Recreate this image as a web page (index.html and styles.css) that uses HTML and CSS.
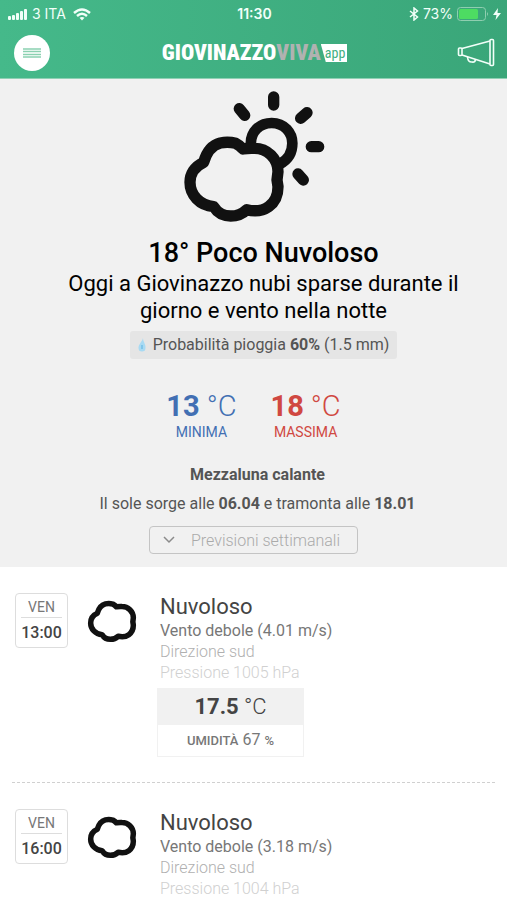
FILE: index.html
```
<!DOCTYPE html>
<html lang="it">
<head>
<meta charset="utf-8">
<meta name="viewport" content="width=device-width, initial-scale=1">
<title>GiovinazzoViva app</title>
<link rel="stylesheet" href="styles.css">
</head>
<body>
<svg width="0" height="0" class="defs" aria-hidden="true">
  <symbol id="cloud" viewBox="70 165 306 266">
    <path d="M132 247C104 260 91 283 91 307C91 345 120 376 162 380C173 398 192 408 213 408C232 408 250 400 261 389C312 402 355 374 355 320L352 300L355 275C355 235 322 205 285 205Q265 204 250 207Q240 196 228 190Q205 184 182 189C155 196 140 218 132 247Z" fill="none" stroke="#111" stroke-width="34" stroke-linejoin="round"/>
  </symbol>
</svg>
<header class="top">
  <div class="status">
    <div class="status-left">
      <svg width="20" height="13" viewBox="0 0 20 13" fill="#f2fff9"><rect x="0" y="8" width="3" height="4" rx="1"/><rect x="4" y="7" width="3" height="5" rx="1"/><rect x="8" y="5" width="3" height="7" rx="1"/><rect x="12" y="3" width="3" height="9" rx="1"/><rect x="16" y="1" width="3" height="11" rx="1"/></svg>
      <span class="carrier">3 ITA</span>
      <svg width="18" height="13" viewBox="0 0 18 13" fill="none" stroke="#f2fff9" stroke-width="2.4"><path d="M1 5Q9-2 17 5M4 8Q9 3.500 14 8"/><path d="M6.500 9.800Q9 8 11.500 9.800L9 12.500Z" fill="#f2fff9" stroke="none"/></svg>
    </div>
    <span class="clock">11:30</span>
    <div class="status-right">
      <svg width="10" height="14" viewBox="0 0 10 14" fill="none" stroke="#f2fff9" stroke-width="1.500"><path d="M1 4L8.500 10L5 13V1L8.500 4L1 10"/></svg>
      <span>73%</span>
      <svg width="32" height="14" viewBox="0 0 32 14"><rect x=".5" y=".5" width="28" height="13" rx="3" fill="none" stroke="#8fceb0"/><rect x="2" y="2" width="19" height="10" rx="1.500" fill="#4ddc62"/><path d="M30 5Q32 7 30 9Z" fill="#8fceb0"/></svg>
      <svg width="8" height="12" viewBox="0 0 8 12"><path d="M5 0L0 7H3.500L2.500 12L8 5H4.500Z" fill="#f2fff9"/></svg>
    </div>
  </div>
  <nav class="bar">
    <button class="menu" type="button" aria-label="Menu"><svg width="18" height="12" viewBox="0 0 18 12" stroke="#8bd1b1" stroke-width="1.300"><path d="M0 2H18M0 4.500H18M0 7.500H18M0 10H18"/></svg></button>
    <a class="logo" href="#"><span>GIOVINAZZO</span><span class="viva">VIVA</span><span class="app">app</span></a>
    <button class="mega" type="button" aria-label="Annunci"><svg width="38" height="30" viewBox="0 0 38 30" fill="none" stroke="#f2fff9" stroke-width="1.600" stroke-linejoin="round"><rect x="1.500" y="10" width="3.500" height="7.500" rx="1"/><path d="M5 10.500L33 3M5 17L33 26"/><rect x="33" y="1.500" width="3.500" height="26" rx="1"/><path d="M10.500 19Q11 24.500 15 24Q18 24.500 18.500 21.500"/></svg></button>
  </nav>
</header>
<main>
  <section class="today">
    <svg class="weather" width="142" height="132" viewBox="70 33 426 396" fill="none" stroke="#111" stroke-linecap="round" aria-hidden="true">
      <path d="M274 200C269 154 302 129 336 129C374 129 398 158 398 190C398 219 384 240 361 252" stroke-width="32" stroke-linecap="butt"/>
      <path d="M342 51V75M239 86L255 106M442 98L423 115M455 200H477M415 282L431 300" stroke-width="34"/>
      <use href="#cloud" x="70" y="165" width="306" height="266"/>
    </svg>
    <div class="headline">
      <h1>18° Poco Nuvoloso</h1>
      <p class="summary">Oggi a Giovinazzo nubi sparse durante il giorno e vento nella notte</p>
      <p class="rain"><svg width="8" height="14" viewBox="0 0 8 14"><path d="M5 0C5 4 8 6 7.500 10A3.500 3.500 0 0 1 .5 10C.5 6 4 4 5 0Z" fill="#a8daf3"/><path d="M4 7V11" stroke="#80c6ea" stroke-width="2"/></svg><span>Probabilità pioggia <b>60%</b> (1.5 mm)</span></p>
    </div>
    <div class="range">
      <div class="min"><span class="deg"><b>13</b> °C</span><span class="cap">MINIMA</span></div>
      <div class="max"><span class="deg"><b>18</b> °C</span><span class="cap">MASSIMA</span></div>
    </div>
    <div class="sky">
      <p class="moon">Mezzaluna calante</p>
      <p>Il sole sorge alle <b>06.04</b> e tramonta alle <b>18.01</b></p>
    </div>
    <button class="week" type="button"><svg width="12" height="8" viewBox="0 0 12 8" fill="none" stroke="#8b8b8b" stroke-width="1.500"><path d="M1 1L6 6L11 1"/></svg>Previsioni settimanali</button>
  </section>
  <section class="hours">
    <article class="hour">
      <div class="time"><span class="day">VEN</span><b>13:00</b></div>
      <svg class="cloud" width="50" height="43" aria-hidden="true"><use href="#cloud" width="50" height="43"/></svg>
      <div class="info">
        <h2>Nuvoloso</h2>
        <p class="wind">Vento debole (4.01 m/s)</p>
        <p class="dir">Direzione sud</p>
        <p class="press">Pressione 1005 hPa</p>
        <div class="panel">
          <div class="temp"><b>17.5</b> °C</div>
          <div class="hum"><b>UMIDITÀ</b> <span>67</span> <b>%</b></div>
        </div>
      </div>
    </article>
    <article class="hour">
      <div class="time"><span class="day">VEN</span><b>16:00</b></div>
      <svg class="cloud" width="50" height="43" aria-hidden="true"><use href="#cloud" width="50" height="43"/></svg>
      <div class="info">
        <h2>Nuvoloso</h2>
        <p class="wind">Vento debole (3.18 m/s)</p>
        <p class="dir">Direzione sud</p>
        <p class="press">Pressione 1004 hPa</p>
      </div>
    </article>
  </section>
</main>
</body>
</html>
```
FILE: styles.css
```
* { box-sizing: border-box; }
body { margin: 0; background: #fff; color: #444; font-family: Roboto, "Liberation Sans", sans-serif; }
h1, h2, p { margin: 0; }
button { margin: 0; padding: 0; border: 0; background: none; font: inherit; }
svg { display: block; flex: none; }
.defs { position: absolute; }

.top { background: linear-gradient(90deg, #45b98a, #3aa679); color: #f2fff9; border-bottom: 1px solid #8fd0b4; }
.status { display: grid; grid-template-columns: 1fr auto 1fr; align-items: center; height: 28px; padding: 0 6px 0 8px; font: 14px/20px Inter, "Liberation Sans", sans-serif; }
.status-left, .status-right { display: flex; align-items: center; gap: 4px; }
.status-right { justify-content: flex-end; }
.carrier { margin-right: 3px; }
.clock { font-weight: 600; }
.bar { display: grid; grid-template-columns: 1fr auto 1fr; align-items: center; height: 50px; padding: 0 12px 0 14px; }
.menu { display: flex; align-items: center; justify-content: center; width: 36px; height: 36px; border-radius: 50%; background: #fff; }
.mega { justify-self: end; }
.logo { display: flex; align-items: center; color: #fff; text-decoration: none; font: 900 22px/24px "Roboto Condensed", "Liberation Sans Narrow", Roboto, sans-serif; }
.viva { color: #b0b2b1; }
.app { padding: 0 2px 0 4px; background: #fff; color: #3faf81; font: 14px/18px "Roboto Condensed", Roboto, sans-serif; clip-path: polygon(0 0, 100% 0, 100% 100%, 5px 100%); }

.today { display: flex; flex-direction: column; align-items: center; padding: 12px 48px 13px; background: #f1f1f1; text-align: center; }
.weather { margin-bottom: 13px; }
.headline { display: flex; flex-direction: column; align-items: center; padding-left: 20px; }
h1 { color: #000; font-size: 27px; line-height: 34px; font-weight: 500; }
.summary { color: #000; font-size: 22px; line-height: 27px; }
.rain { display: flex; align-items: center; gap: 7px; margin: 7px 0 30px; padding: 0 8px; border-radius: 3px; background: #e5e5e5; color: #555; font-size: 16px; line-height: 28px; }
.range { display: flex; gap: 34px; margin-bottom: 19px; }
.range > div { display: flex; flex-direction: column; }
.deg { font-size: 29px; line-height: 34px; font-weight: 300; }
.deg b { font-weight: 700; }
.cap { font-size: 14px; line-height: 18px; }
.min { color: #426fb3; }
.max { color: #d04841; }
.sky { padding-left: 8px; color: #555; font-size: 16px; line-height: 29px; }
.moon { font-weight: 700; }
.week { display: flex; align-items: center; gap: 16px; height: 28px; margin-top: 8px; padding: 0 17px 0 13px; border: 1px solid #c4c4c4; border-radius: 4px; color: #aaa; font-size: 16px; font-weight: 300; }

.hours { padding: 0 12px; }
.hour { display: flex; align-items: flex-start; padding: 26px 3px 25px; }
.hour + .hour { border-top: 1px dashed #d0d0d0; }
.hour:last-child { padding-bottom: 0; }
.time { display: flex; flex-direction: column; align-items: center; width: 53px; padding: 3px 5px 0; border: 1px solid #ddd; border-radius: 4px; font-size: 16px; line-height: 29px; }
.time b { font-weight: 500; }
.day { align-self: stretch; border-bottom: 1px solid #ddd; color: #777; text-align: center; font-size: 14px; line-height: 20px; }
.cloud { margin: 7px 20px 0 19px; }
.info { margin-left: 3px; }
h2 { font-size: 22px; line-height: 27px; font-weight: 400; }
.info p { font-size: 16px; line-height: 21px; }
.wind { color: #777; }
.info .dir { color: #b0b0b0; font-weight: 300; }
.info .press { color: #d0d0d0; font-weight: 300; }
.panel { width: 147px; margin: 5px 0 0 -3px; border: 1px solid #f1f1f1; text-align: center; }
.temp { background: #f1f1f1; font-size: 22px; line-height: 36px; font-weight: 300; }
.temp b { font-weight: 700; }
.hum { color: #777; font-size: 16px; line-height: 30px; }
.hum b { font-size: 13px; font-weight: 500; }
```
